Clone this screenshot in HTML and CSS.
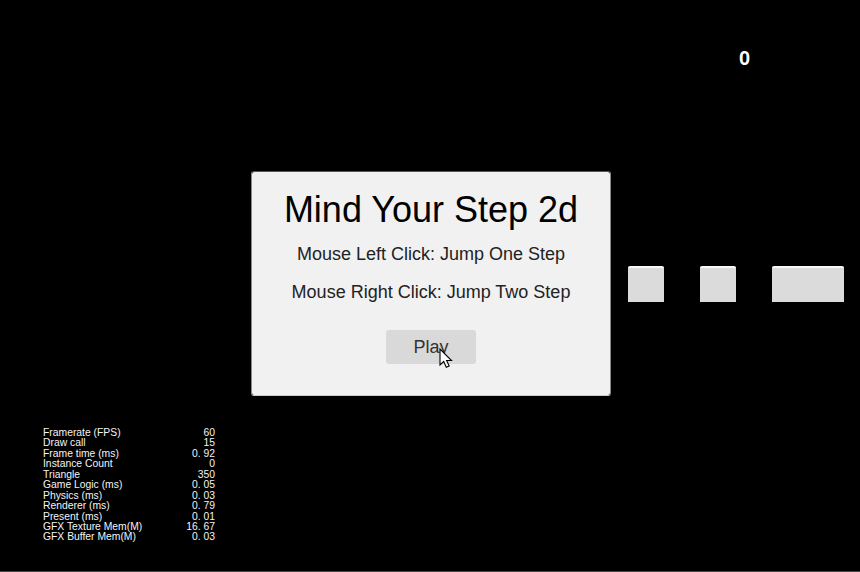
FILE: index.html
```html
<!DOCTYPE html>
<html lang="en">
<head>
<meta charset="utf-8">
<title>Mind Your Step 2d</title>
<link rel="stylesheet" href="styles.css">
</head>
<body>
<header class="hud"><span class="score">0</span></header>
<main class="stage">
  <section class="panel">
    <h1 class="title">Mind Your Step 2d</h1>
    <p class="hint hint-left">Mouse Left Click: Jump One Step</p>
    <p class="hint">Mouse Right Click: Jump Two Step</p>
    <button class="play">Play
      <svg class="cursor" width="14" height="21" viewBox="0 0 14 21"><path d="M1 1V17L4.7 13.5L7.3 19.2L10.2 18L7.6 12.5H12.5Z" fill="#fff" stroke="#000" stroke-width="1.1"/></svg>
    </button>
  </section>
  <div class="road">
    <div class="block"></div>
    <div class="block"></div>
    <div class="block wide"></div>
  </div>
</main>
<dl class="stats">
  <dt>Framerate (FPS)</dt><dd>60</dd>
  <dt>Draw call</dt><dd>15</dd>
  <dt>Frame time (ms)</dt><dd>0. 92</dd>
  <dt>Instance Count</dt><dd>0</dd>
  <dt>Triangle</dt><dd>350</dd>
  <dt>Game Logic (ms)</dt><dd>0. 05</dd>
  <dt>Physics (ms)</dt><dd>0. 03</dd>
  <dt>Renderer (ms)</dt><dd>0. 79</dd>
  <dt>Present (ms)</dt><dd>0. 01</dd>
  <dt>GFX Texture Mem(M)</dt><dd>16. 67</dd>
  <dt>GFX Buffer Mem(M)</dt><dd>0. 03</dd>
</dl>
</body>
</html>
```
FILE: styles.css
```css
* { box-sizing: border-box; margin: 0; }
body {
  height: 572px;
  background: #000;
  border-bottom: 1px solid #444;
  font-family: "Liberation Sans", Arial, sans-serif;
  overflow: hidden;
}
.hud {
  height: 171px;
  padding: 46px 110px 0 0;
  text-align: right;
}
.score {
  display: block;
  font: 700 20px/24px "Liberation Sans", Arial, sans-serif;
  color: #fff;
}
.stage {
  display: flex;
  height: 225px;
  padding-left: 251px;
}
.panel {
  width: 360px;
  height: 225px;
  padding-top: 18px;
  background: #f1f1f1;
  background-clip: padding-box;
  border: 1px solid #888;
  border-top-color: #555;
  border-bottom-color: #ccc;
  border-radius: 3px;
  text-align: center;
}
.title {
  font-size: 36px;
  font-weight: 400;
  line-height: 40px;
  color: #000;
}
.hint {
  margin-top: 14px;
  font-size: 18px;
  line-height: 24px;
  color: #222;
}
.hint-left { margin-top: 12px; }
.play {
  display: block;
  position: relative;
  width: 90px;
  height: 34px;
  margin: 26px auto 0;
  padding: 0;
  border: 0;
  border-radius: 3px;
  background: #d9d9d9;
  font: 18px/32px "Liberation Sans", Arial, sans-serif;
  color: #333;
}
.cursor {
  position: absolute;
  left: 53px;
  top: 18px;
}
.road {
  display: flex;
  gap: 36px;
  padding: 95px 0 0 17px;
}
.block {
  width: 36px;
  height: 36px;
  background: #dbdbdb;
  border-top: 2px solid #f8f8f8;
  border-radius: 2px 2px 0 0;
}
.wide { width: 72px; }
.stats {
  display: grid;
  grid-template-columns: 1fr auto;
  grid-auto-rows: 10.45px;
  width: 172px;
  margin: 32px 0 0 43px;
  font-size: 10.35px;
  line-height: 10.45px;
  color: #f4f4f4;
}
.stats dd { text-align: right; }
```
